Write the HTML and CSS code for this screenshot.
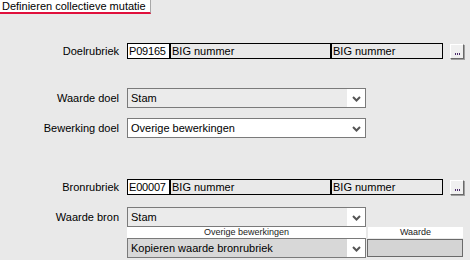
FILE: index.html
```html
<!DOCTYPE html>
<html>
<head>
<meta charset="utf-8">
<link rel="stylesheet" href="styles.css">
</head>
<body>
<div class="tab">Definieren collectieve mutatie</div>
<div class="form">
  <div class="row r1">
    <div class="label">Doelrubriek</div>
    <div class="rub">
      <div class="code">P09165</div>
      <div class="name n1">BIG nummer</div>
      <div class="name n2">BIG nummer</div>
      <div class="btn"><span class="dot"></span><span class="dot"></span><span class="dot"></span></div>
    </div>
  </div>
  <div class="row r2">
    <div class="label">Waarde doel</div>
    <div class="select grey">
      <div class="val">Stam</div>
      <div class="chev"><svg width="9" height="6" viewBox="0 0 9 6"><polyline points="1,1 4.5,4.5 8,1" fill="none" stroke="#555" stroke-width="2"/></svg></div>
    </div>
  </div>
  <div class="row r3">
    <div class="label">Bewerking doel</div>
    <div class="select white">
      <div class="val">Overige bewerkingen</div>
      <div class="chev"><svg width="9" height="6" viewBox="0 0 9 6"><polyline points="1,1 4.5,4.5 8,1" fill="none" stroke="#555" stroke-width="2"/></svg></div>
    </div>
  </div>
  <div class="row r4">
    <div class="label">Bronrubriek</div>
    <div class="rub">
      <div class="code">E00007</div>
      <div class="name n1">BIG nummer</div>
      <div class="name n2">BIG nummer</div>
      <div class="btn"><span class="dot"></span><span class="dot"></span><span class="dot"></span></div>
    </div>
  </div>
  <div class="row r5">
    <div class="label">Waarde bron</div>
    <div class="select grey">
      <div class="val">Stam</div>
      <div class="chev"><svg width="9" height="6" viewBox="0 0 9 6"><polyline points="1,1 4.5,4.5 8,1" fill="none" stroke="#555" stroke-width="2"/></svg></div>
    </div>
  </div>
  <div class="row r6">
    <div></div>
    <div class="grid">
      <div class="hcell">Overige bewerkingen</div>
      <div class="hcell hw">Waarde</div>
      <div class="select dark">
        <div class="val">Kopieren waarde bronrubriek</div>
        <div class="chev"><svg width="9" height="6" viewBox="0 0 9 6"><polyline points="1,1 4.5,4.5 8,1" fill="none" stroke="#555" stroke-width="2"/></svg></div>
      </div>
      <div class="wcell"></div>
    </div>
  </div>
</div>
</body>
</html>
```
FILE: styles.css
```css
html, body {
  margin: 0;
  padding: 0;
  background: #e9e9e9;
  font-family: "Liberation Sans", Arial, sans-serif;
  font-size: 11px;
  color: #000;
}
.tab {
  width: 148px;
  height: 12px;
  line-height: 12px;
  padding-left: 2px;
  background: #fff;
  border-right: 1px solid #a8a8a8;
  border-bottom: 2px solid #e0103c;
  white-space: nowrap;
}
.form {
  display: flex;
  flex-direction: column;
}
.row {
  display: grid;
  grid-template-columns: 119px auto;
  column-gap: 8px;
  align-items: center;
}
.label {
  text-align: right;
  white-space: nowrap;
}
.r1 { margin-top: 29px; }
.r2 { margin-top: 29px; }
.r3 { margin-top: 10px; }
.r4 { margin-top: 41px; }
.r5 { margin-top: 12px; }
.rub {
  display: flex;
  align-items: center;
}
.code, .name {
  box-sizing: border-box;
  height: 16px;
  line-height: 14px;
  border: 1px solid #000;
  padding: 0 1px;
  white-space: nowrap;
  overflow: hidden;
}
.code { width: 43px; background: #fff; letter-spacing: -0.2px; }
.name { background: #e9e9e9; }
.n1 { width: 161px; }
.n2 { width: 112px; }
.btn {
  box-sizing: border-box;
  width: 14px;
  height: 15px;
  margin-left: 7px;
  background: #f0f0f0;
  border-top: 1px solid #fff;
  border-left: 1px solid #fff;
  border-right: 1px solid #6a6a6a;
  border-bottom: 1px solid #6a6a6a;
  box-shadow: 1px 1px 0 #a0a0a0;
  display: flex;
  justify-content: center;
  align-items: flex-end;
  gap: 1px;
  padding-bottom: 3px;
}
.dot {
  width: 1px;
  height: 2px;
  background: #4a2a6a;
}
.select {
  box-sizing: border-box;
  width: 239px;
  height: 20px;
  border: 1px solid #7a7a7a;
  display: flex;
}
.select .val {
  flex: 1;
  padding-left: 3px;
  line-height: 18px;
  white-space: nowrap;
  overflow: hidden;
}
.select .chev {
  width: 18px;
  background: #fff;
  display: flex;
  align-items: center;
  justify-content: center;
  padding-top: 2px;
  box-sizing: border-box;
}
.grey .val { background: #ebebeb; }
.white .val { background: #fff; }
.dark .val { background: #d8d8d8; }
.grid {
  display: grid;
  grid-template-columns: 239px 97px;
}
.hcell {
  background: #fff;
  height: 11px;
  line-height: 11px;
  font-size: 9px;
  text-align: center;
  color: #222;
}
.hw {
  border-left: 2px solid #e9e9e9;
}
.wcell {
  box-sizing: border-box;
  height: 18px;
  margin: 1px 0 0 1px;
  background: #d4d4d4;
  border: 1px solid #6a6a6a;
}
```
